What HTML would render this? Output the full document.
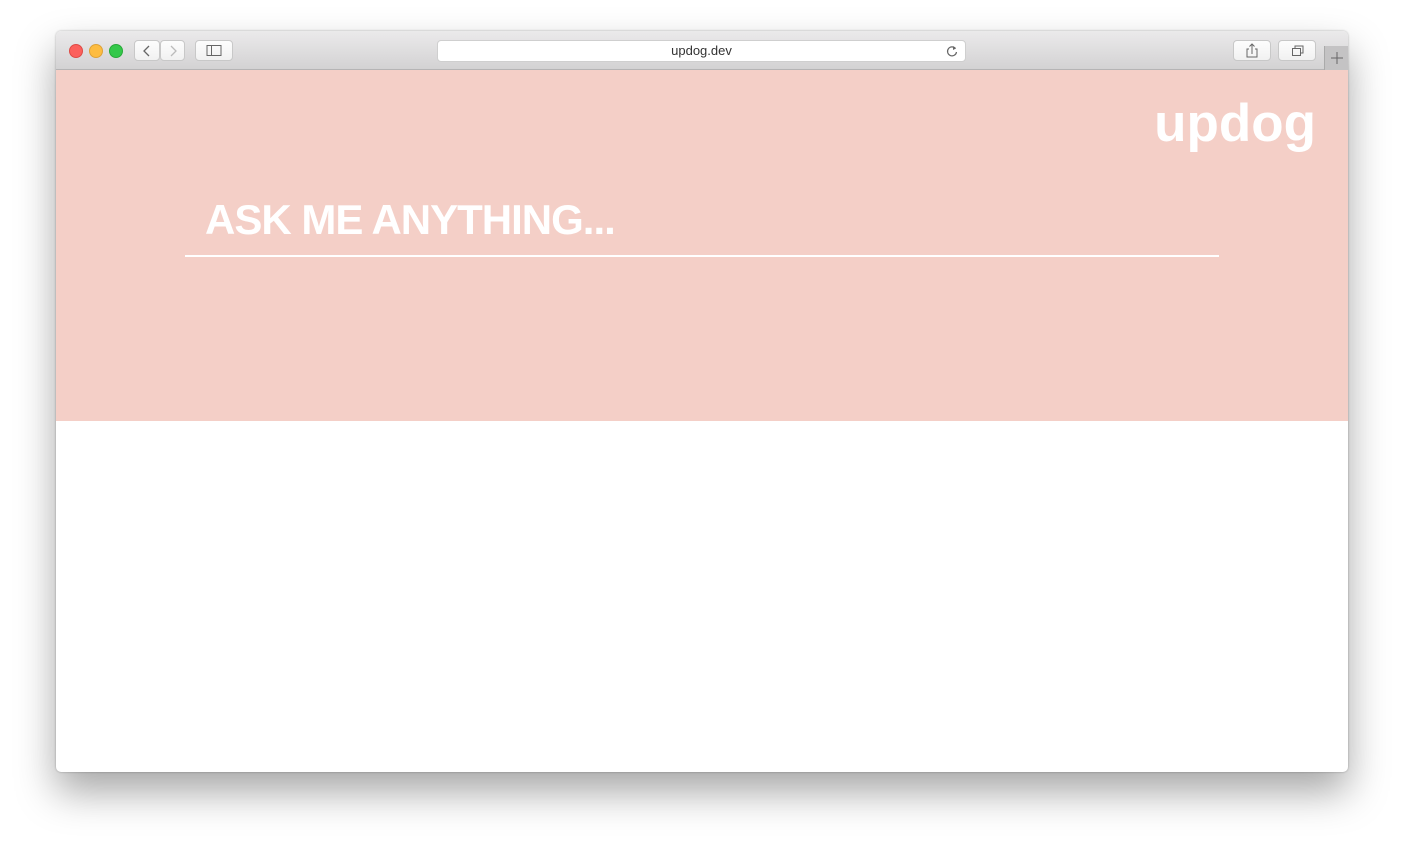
<!DOCTYPE html>
<html><head><style>
body{margin:0;width:1404px;height:853px;background:#fff;position:relative;overflow:hidden;font-family:"Liberation Sans",sans-serif}
.win{position:absolute;left:56px;top:31px;width:1292px;height:741px;background:#fff;border-radius:5px;overflow:hidden;box-shadow:0 20px 40px rgba(0,0,0,.35),0 0 2px rgba(0,0,0,.3)}
.bar{position:absolute;left:0;top:0;width:100%;height:38px;background:linear-gradient(#ebeaeb,#d3d2d3);border-bottom:1px solid #b5b4b5}
.dot{position:absolute;top:13px;width:12px;height:12px;border-radius:50%}
.btn{position:absolute;top:9px;height:21px;background:linear-gradient(#fdfdfd,#f1f1f1);border:1px solid #c8c8c8;border-radius:4px;box-sizing:border-box}
.url{position:absolute;left:381px;top:9px;width:529px;height:22px;background:#fff;border:1px solid #cfcfcf;border-radius:4px;box-sizing:border-box;text-align:center;font-size:13px;line-height:20px;color:#333}
.pink{position:absolute;left:0;top:39px;width:100%;height:351px;background:#f4cfc7}
.logo{position:absolute;right:32px;top:23px;color:#fff;font-weight:bold;font-size:53px;letter-spacing:0}
.ask{position:absolute;left:149px;top:126px;color:#fff;font-weight:bold;font-size:42px;letter-spacing:-1px}
.line{position:absolute;left:129px;top:185px;width:1034px;height:2px;background:#fff}
</style></head><body>
<div class="win">
<div class="bar">
<div class="dot" style="left:13px;background:#fc605c;border:0.5px solid #de4a45"></div>
<div class="dot" style="left:33px;background:#fdbc40;border:0.5px solid #dea236"></div>
<div class="dot" style="left:53px;background:#34c84a;border:0.5px solid #27a938"></div>
<div class="btn" style="left:78px;width:26px"><svg width="24" height="19"><path d="M14 5l-5 5 5 5" fill="none" stroke="#666" stroke-width="1.3"/></svg></div>
<div class="btn" style="left:104px;width:25px"><svg width="24" height="19"><path d="M10 5l5 5-5 5" fill="none" stroke="#bbb" stroke-width="1.3"/></svg></div>
<div class="btn" style="left:139px;width:38px"><svg width="36" height="19"><rect x="11" y="4.5" width="14" height="10" fill="none" stroke="#666"/><line x1="15.5" y1="4.5" x2="15.5" y2="14.5" stroke="#666"/></svg></div>
<div class="url">updog.dev<svg style="position:absolute;right:6px;top:3px" width="14" height="14"><path d="M10.5 4.5A4.5 4.5 0 1 0 11.5 8" fill="none" stroke="#666" stroke-width="1.2"/><path d="M8 2l3 2.5-3 1.5z" fill="#666"/></svg></div>
<div class="btn" style="left:1177px;width:38px"><svg width="36" height="19"><path d="M15 8h-2v8h10V8h-2M18 13V3M15.5 5.5L18 3l2.5 2.5" fill="none" stroke="#666"/></svg></div>
<div class="btn" style="left:1222px;width:38px"><svg width="36" height="19"><rect x="13.5" y="7.5" width="8" height="7" fill="none" stroke="#666"/><path d="M16 7.5V5h8v7h-2.5" fill="none" stroke="#666"/></svg></div>
<div style="position:absolute;left:1268px;top:15px;width:24px;height:24px;background:#c4c3c4;border-left:1px solid #aaa"><svg width="24" height="24"><path d="M12 6v12M6 12h12" stroke="#666"/></svg></div>
</div>
<div class="pink">
<div class="logo">updog</div>
<div class="ask">ASK ME ANYTHING...</div>
<div class="line"></div>
</div>
</div>
</body></html>
